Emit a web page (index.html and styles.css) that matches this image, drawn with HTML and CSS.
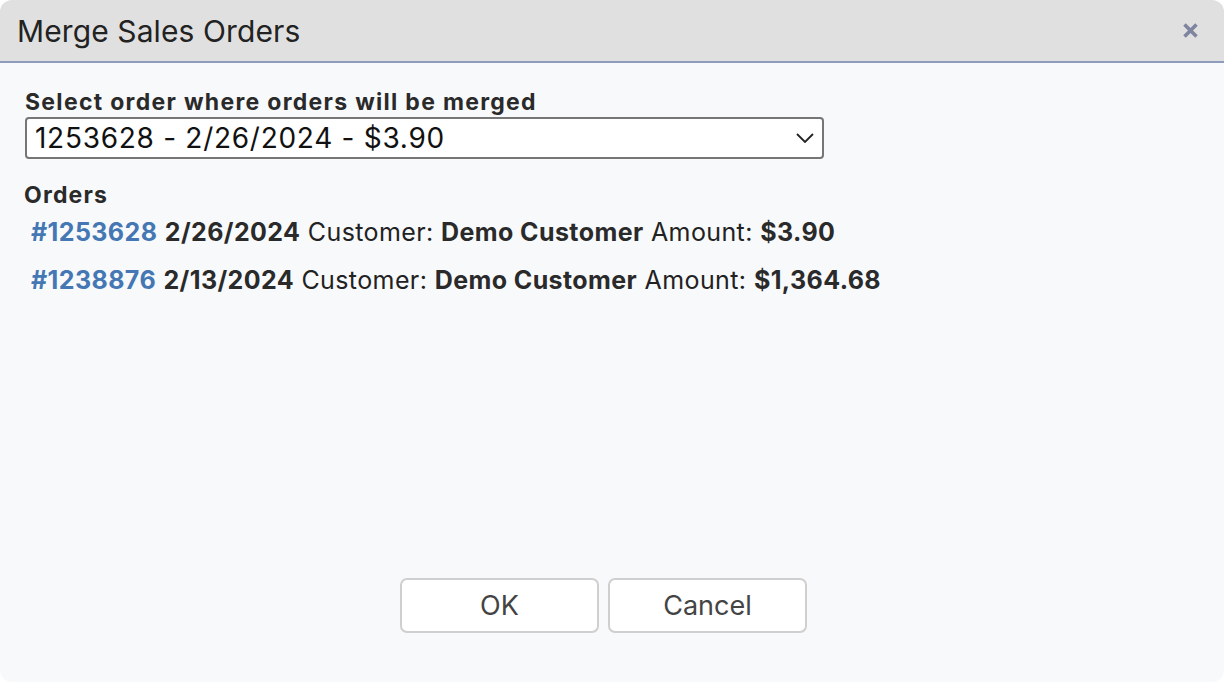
FILE: index.html
```html
<!DOCTYPE html>
<html>
<head>
<meta charset="utf-8">
<link rel="stylesheet" href="styles.css">
</head>
<body>
<div class="dialog">
  <div class="titlebar">
    <span class="title">Merge Sales Orders</span>
    <span class="close" aria-label="close">
      <svg width="17" height="17" viewBox="0 0 17 17"><path d="M2.5 2.5 L14.5 14.5 M14.5 2.5 L2.5 14.5" stroke="#80859f" stroke-width="3.6" stroke-linecap="butt"/></svg>
    </span>
  </div>
  <div class="content">
    <label class="label">Select order where orders will be merged</label>
    <div class="select">
      <span class="select-value">1253628 - 2/26/2024 - $3.90</span>
      <svg class="chev" width="18" height="10" viewBox="0 0 18 10"><path d="M1 1 L9 9 L17 1" fill="none" stroke="#222" stroke-width="1.8"/></svg>
    </div>
    <div class="section">Orders</div>
    <ul class="orders">
      <li><a class="num">#1253628</a> <b>2/26/2024</b> Customer: <b>Demo Customer</b> Amount: <b>$3.90</b></li>
      <li><a class="num">#1238876</a> <b>2/13/2024</b> Customer: <b>Demo Customer</b> Amount: <b>$1,364.68</b></li>
    </ul>
    <div class="buttons">
      <button class="btn">OK</button>
      <button class="btn">Cancel</button>
    </div>
  </div>
</div>
</body>
</html>
```
FILE: styles.css
```css
html, body {
  margin: 0;
  padding: 0;
  background: #ffffff;
}
body {
  font-family: Inter, "Noto Sans", sans-serif;
  color: #222;
}
.dialog {
  width: 1224px;
  height: 682px;
  border-radius: 12px;
  overflow: hidden;
  background: #f8f9fb;
  display: flex;
  flex-direction: column;
}
.titlebar {
  height: 61px;
  background: #e0e0e0;
  border-bottom: 2px solid #8e9dbb;
  display: flex;
  align-items: center;
  justify-content: space-between;
  padding: 0 25px 0 17px;
  flex-shrink: 0;
}
.title {
  font-size: 30px;
  letter-spacing: 0.1px;
  color: #222;
}
.close {
  display: flex;
}
.content {
  flex: 1;
  display: flex;
  flex-direction: column;
  padding: 25px 25px 49px 25px;
}
.label {
  font-size: 23px;
  font-weight: 700;
  letter-spacing: 1.3px;
  line-height: 29px;
  color: #2a2a2a;
}
.select {
  width: 799px;
  height: 42px;
  box-sizing: border-box;
  background: #fff;
  border: 2px solid #767676;
  border-radius: 4px;
  display: flex;
  align-items: center;
  justify-content: space-between;
  padding: 0 8px 0 8px;
}
.select-value {
  font-size: 28px;
  letter-spacing: 0.72px;
  color: #111;
}
.section {
  margin-top: 22px;
  font-size: 23px;
  font-weight: 700;
  letter-spacing: 1.2px;
  line-height: 28px;
  color: #2a2a2a;
  margin-left: -1px;
}
.orders {
  list-style: none;
  margin: 8px 0 0 0;
  padding: 0 0 0 6px;
  font-size: 25px;
  letter-spacing: 0.4px;
  color: #222;
}
.orders li {
  line-height: 30px;
  margin-bottom: 18px;
}
.orders b {
  font-weight: 700;
  color: #2a2a2a;
}
.num {
  color: #4477b3;
  font-weight: 700;
}
.buttons {
  margin-top: auto;
  display: flex;
  justify-content: center;
  gap: 9px;
  padding-right: 17px;
}
.btn {
  width: 199px;
  height: 55px;
  background: #fff;
  border: 2px solid #cfcfcf;
  border-radius: 7px;
  font-family: Inter, "Noto Sans", sans-serif;
  font-size: 27px;
  color: #444;
}
```
